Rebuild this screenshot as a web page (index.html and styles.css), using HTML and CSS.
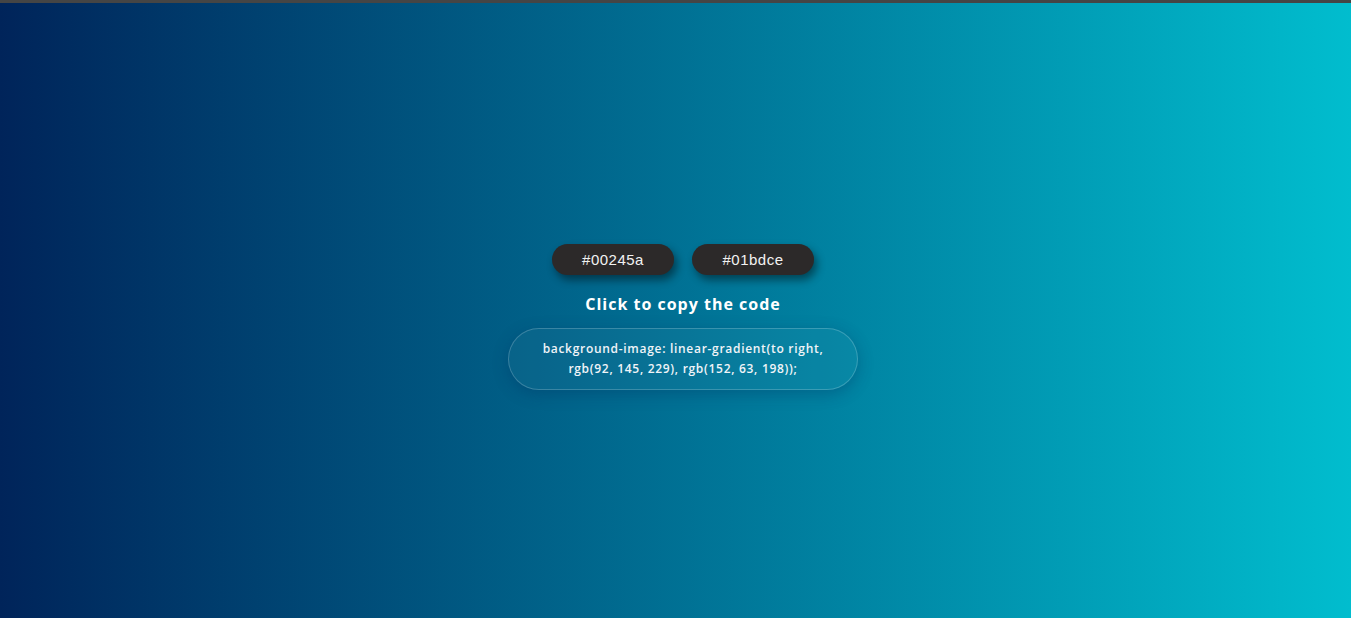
FILE: index.html
```html
<!DOCTYPE html>
<html>
<head>
<meta charset="utf-8">
<link rel="stylesheet" href="styles.css">
</head>
<body>
<div class="topbar"></div>
<main class="page">
  <div class="buttons">
    <button class="color-btn">#00245a</button>
    <button class="color-btn">#01bdce</button>
  </div>
  <h3 class="hint">Click to copy the code</h3>
  <div class="code">background-image: linear-gradient(to right, rgb(92, 145, 229), rgb(152, 63, 198));</div>
</main>
</body>
</html>
```
FILE: styles.css
```css
html, body {
  margin: 0;
  padding: 0;
  height: 100%;
}
body {
  background-image: linear-gradient(to right, #00245a, #01bdce);
  font-family: "Open Sans", "Noto Sans", sans-serif;
  overflow: hidden;
  display: flex;
  flex-direction: column;
}
.topbar {
  height: 3px;
  background: #454545;
}
.page {
  flex: 1;
  display: flex;
  flex-direction: column;
  align-items: center;
  padding-left: 15px;
  padding-top: 241px;
}
.buttons {
  display: flex;
  gap: 18px;
}
.color-btn {
  width: 122px;
  height: 31px;
  border: none;
  border-radius: 16px;
  background: #2c2929;
  color: #f2f2f2;
  font-family: "Liberation Sans", Arial, sans-serif;
  font-size: 15px;
  letter-spacing: 0.5px;
  box-shadow: 3px 5px 8px rgba(0, 0, 0, 0.45);
  cursor: pointer;
}
.hint {
  margin: 18px 0 0;
  color: #ffffff;
  font-size: 16px;
  font-weight: 700;
  letter-spacing: 1px;
  line-height: 22px;
}
.code {
  box-sizing: border-box;
  margin-top: 13px;
  width: 350px;
  height: 62px;
  padding: 10px 20px;
  border: 1px solid rgba(255, 255, 255, 0.2);
  border-radius: 31px;
  background: rgba(255, 255, 255, 0.03);
  box-shadow: 0 4px 16px rgba(0, 40, 90, 0.3);
  color: #f0f4f8;
  font-size: 12px;
  font-weight: 600;
  letter-spacing: 0.7px;
  line-height: 20px;
  text-align: center;
}
```
